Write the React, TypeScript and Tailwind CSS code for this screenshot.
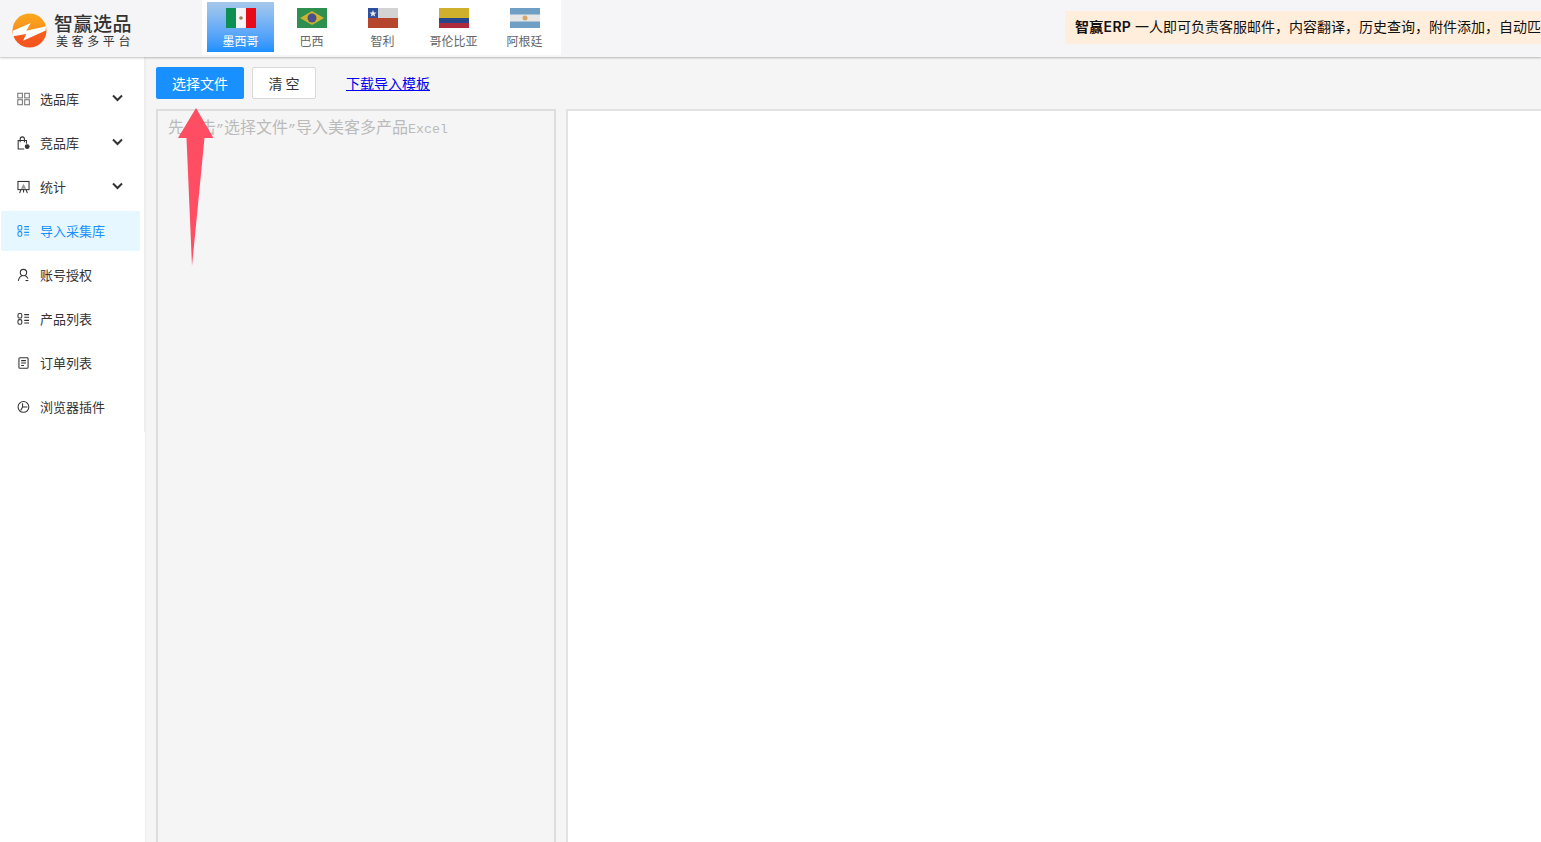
import type { ReactNode } from 'react';

const cjk = '[font-family:"Noto_Sans_CJK_SC","Liberation_Sans",sans-serif]';

const flags: { name: string; flag: ReactNode }[] = [
  {
    name: '墨西哥',
    flag: (
      <svg width="30" height="20" viewBox="0 0 30 20">
        <rect width="10" height="20" fill="#0b8f52" />
        <rect x="10" width="10" height="20" fill="#f5f5f5" />
        <rect x="20" width="10" height="20" fill="#e60b17" />
        <circle cx="15" cy="10" r="1.8" fill="#a07a4f" />
      </svg>
    ),
  },
  {
    name: '巴西',
    flag: (
      <svg width="30" height="20" viewBox="0 0 30 20">
        <rect width="30" height="20" fill="#2f8f4e" />
        <polygon points="15,3 27,10 15,17 3,10" fill="#cdb22e" />
        <circle cx="15" cy="10" r="4.5" fill="#4a4f8c" />
      </svg>
    ),
  },
  {
    name: '智利',
    flag: (
      <svg width="30" height="20" viewBox="0 0 30 20">
        <rect width="30" height="10" fill="#d3d3d3" />
        <rect y="10" width="30" height="10" fill="#b5452c" />
        <rect width="10" height="10" fill="#2c4f9e" />
        <polygon points="5,2 6,4.6 8.6,4.6 6.5,6.2 7.3,8.6 5,7.2 2.7,8.6 3.500,6.2 1.400,4.6 4,4.6" fill="#e8e8e8" />
      </svg>
    ),
  },
  {
    name: '哥伦比亚',
    flag: (
      <svg width="30" height="20" viewBox="0 0 30 20">
        <rect width="30" height="10" fill="#cfb02c" />
        <rect y="10" width="30" height="5" fill="#26478c" />
        <rect y="15" width="30" height="5" fill="#ad2c3c" />
      </svg>
    ),
  },
  {
    name: '阿根廷',
    flag: (
      <svg width="30" height="20" viewBox="0 0 30 20">
        <rect width="30" height="20" fill="#6f9fc4" />
        <rect y="6.500" width="30" height="7" fill="#e6e6e6" />
        <circle cx="15" cy="10" r="2.500" fill="#d6a76a" />
      </svg>
    ),
  },
];

const stroke = { fill: 'none', stroke: 'currentColor', strokeWidth: 1.1 };

const icons: Record<string, ReactNode> = {
  grid: (
    <g {...stroke} stroke="#777">
      <rect x="0.800" y="0.800" width="4.800" height="4.800" />
      <rect x="8" y="0.800" width="4.800" height="4.800" />
      <rect x="0.800" y="7.500" width="4.800" height="5.200" />
      <rect x="8" y="7.500" width="4.800" height="5.200" />
    </g>
  ),
  bag: (
    <g {...stroke}>
      <path d="M7.500 13H1.200V4.200h8.600v3.300" />
      <path d="M3.300 6V2.600a2.200 2.200 0 0 1 4.400 0V6" />
      <circle cx="10.600" cy="10.500" r="2" fill="currentColor" />
    </g>
  ),
  board: (
    <g {...stroke}>
      <rect x="1" y="1" width="11.500" height="8.500" />
      <path d="M4 9.500 2.800 13.200M9.500 9.500l1.200 3.700M6.800 9.500v3" />
      <path d="M4 8.500 6.800 3.500 9.500 8.500Z" fill="#999" stroke="none" />
    </g>
  ),
  list: (
    <g {...stroke}>
      <rect x="1" y="1" width="4" height="4.800" rx="1.500" />
      <rect x="1" y="7.400" width="4" height="4.800" rx="1.500" />
      <path d="M7.500 2.200H12.500M7.500 5H12.500M7.500 8.200H12.500M7.500 11H12.500" />
    </g>
  ),
  user: (
    <g {...stroke}>
      <circle cx="6.700" cy="4.200" r="3.300" />
      <path d="M1.400 12.800c.5-3 2.200-4.800 3.800-5.300M8.600 7.500c1.200.6 2.200 1.600 2.800 3" />
      <path d="M8.800 12.500h3" />
    </g>
  ),
  doc: (
    <g {...stroke}>
      <rect x="2" y="1.300" width="9.500" height="11" rx="1" />
      <path d="M4.300 4.300h5M4.300 6.800h5M4.300 9.300h3" />
    </g>
  ),
  clock: (
    <g {...stroke}>
      <circle cx="6.700" cy="6.700" r="5.600" />
      <path d="M5.800 2.800v4h5M5.800 6.800 3.800 10.500" />
    </g>
  ),
};

const menu = [
  { label: '选品库', icon: 'grid', arrow: true },
  { label: '竞品库', icon: 'bag', arrow: true },
  { label: '统计', icon: 'board', arrow: true },
  { label: '导入采集库', icon: 'list', active: true },
  { label: '账号授权', icon: 'user' },
  { label: '产品列表', icon: 'list' },
  { label: '订单列表', icon: 'doc' },
  { label: '浏览器插件', icon: 'clock' },
];

function Logo() {
  return (
    <div className="flex items-center pl-[12px] w-[202px] h-full">
      <svg width="35" height="35" viewBox="0 0 35 35" className="shrink-0 mt-[3px]">
        <defs>
          <linearGradient id="logoFill" x1="0" y1="0" x2="0" y2="1">
            <stop offset="0" stopColor="#fba91c" />
            <stop offset="0.500" stopColor="#f8901c" />
            <stop offset="0.520" stopColor="#f4601f" />
            <stop offset="1" stopColor="#f4511e" />
          </linearGradient>
        </defs>
        <circle cx="17.500" cy="17.500" r="17" fill="url(#logoFill)" />
        <path d="M1 17.700 18.700 10 14.300 17.700 34.300 13.300 33.300 17.700 11 27.700 14.300 21 1 23.300Z" fill="#fff" />
      </svg>
      <div className="ml-[7px] pt-[4px] flex flex-col text-[#333]">
        <span className="text-[19px] leading-[20px] tracking-[0.5px] font-medium whitespace-nowrap">智赢选品</span>
        <span className="mt-[1px] text-[12px] leading-[14px] tracking-[3.6px] pl-[2px] whitespace-nowrap">美客多平台</span>
      </div>
    </div>
  );
}

export default function App() {
  return (
    <div className={`relative h-[842px] w-full overflow-hidden flex flex-col bg-[#f5f5f5] ${cjk}`}>
      <header className="relative z-10 h-[57px] shrink-0 flex bg-[#f5f5f7] shadow-[0_1px_2px_rgba(0,0,0,0.25)]">
        <Logo />
        <div className="h-[55px] w-[359px] bg-white flex pl-[5px] pt-[2px]">
          {flags.map((item, i) => (
            <div
              key={item.name}
              className={`h-[50px] flex flex-col items-center pt-[6px] ${
                i === 0
                  ? 'w-[67px] mr-[2px] bg-gradient-to-b from-[#a6c8ea] to-[#1890ff] text-white'
                  : 'w-[71px] text-[#666]'
              }`}
            >
              <div className="h-[20px] w-[30px]">{item.flag}</div>
              <span className="mt-[3px] text-[12px] leading-[20px] whitespace-nowrap">{item.name}</span>
            </div>
          ))}
        </div>
        <div className="flex-1 overflow-hidden pl-[504px] pt-[11px]">
          <div className="h-[33px] w-[600px] bg-[#ffeedb] pl-[10px] text-[14px] leading-[31px] text-[#111] whitespace-nowrap [font-family:Inter,'Noto_Sans_CJK_SC',sans-serif]">
            <b className="font-semibold tracking-[0.3px]">智赢ERP</b> 一人即可负责客服邮件，内容翻译，历史查询，附件添加，自动匹配回复模板
          </div>
        </div>
      </header>

      <div className="flex flex-1 min-h-0">
        <aside className="w-[146px] shrink-0 bg-white border-r border-[#eeeeee]">
          <nav className="w-[145px] h-[375px] border-r border-[#eeeeee] pt-[22px]">
            {menu.map((item) => (
              <div
                key={item.label}
                className={`ml-[1px] w-[139px] h-[40px] mb-[4px] flex items-center pl-[16px] text-[13px] rounded-[2px] ${
                  item.active ? 'bg-[#e6f7ff] text-[#1890ff]' : 'text-[#333]'
                }`}
              >
                <svg width="13" height="14" viewBox="0 0 13.500 13.500" className="shrink-0">
                  {icons[item.icon]}
                </svg>
                <span className="ml-[10px] pb-[1px] flex-1 whitespace-nowrap">{item.label}</span>
                {item.arrow && (
                  <svg width="11" height="8" viewBox="0 0 11 8" className="mr-[17px] mb-[2px]">
                    <path d="M1 1.500 5.500 6 10 1.500" fill="none" stroke="#333" strokeWidth="2" />
                  </svg>
                )}
              </div>
            ))}
          </nav>
        </aside>

        <main className="flex-1 min-w-0 pl-[10px]">
          <div className="flex items-center h-[52px] py-[10px]">
            <button className="h-[32px] w-[88px] bg-[#1890ff] text-white text-[14px] rounded-[2px]">选择文件</button>
            <button className="ml-[8px] h-[32px] w-[64px] bg-white border border-[#d9d9d9] text-[#333] text-[14px] rounded-[2px]">
              清 空
            </button>
            <a className="ml-[30px] text-[14px] text-[#0000ee] underline">下载导入模板</a>
          </div>
          <div className="flex h-[760px]">
            <div className="w-[400px] h-full border-2 border-[#dddddd] bg-[#f5f5f5] pl-[10px] pt-[3px] text-[16px] leading-[24px] text-[#bbbbbb] whitespace-nowrap">
              先点击<span className="font-['Liberation_Mono'] text-[13.33px]">”</span>选择文件
              <span className="font-['Liberation_Mono'] text-[13.33px]">”</span>导入美客多产品
              <span className="font-['Liberation_Mono'] text-[13.33px]">Excel</span>
            </div>
            <div className="ml-[10px] flex-1 h-full bg-white border-2 border-r-0 border-[#e2e2e2]" />
          </div>
        </main>
      </div>

      <svg width="40" height="162" viewBox="0 0 40 162" className="absolute left-[176px] top-[106px] z-20">
        <polygon points="20,2 37.500,32 28.500,32 16,160 10.500,32 2,32" fill="#ff4d63" />
      </svg>
    </div>
  );
}
